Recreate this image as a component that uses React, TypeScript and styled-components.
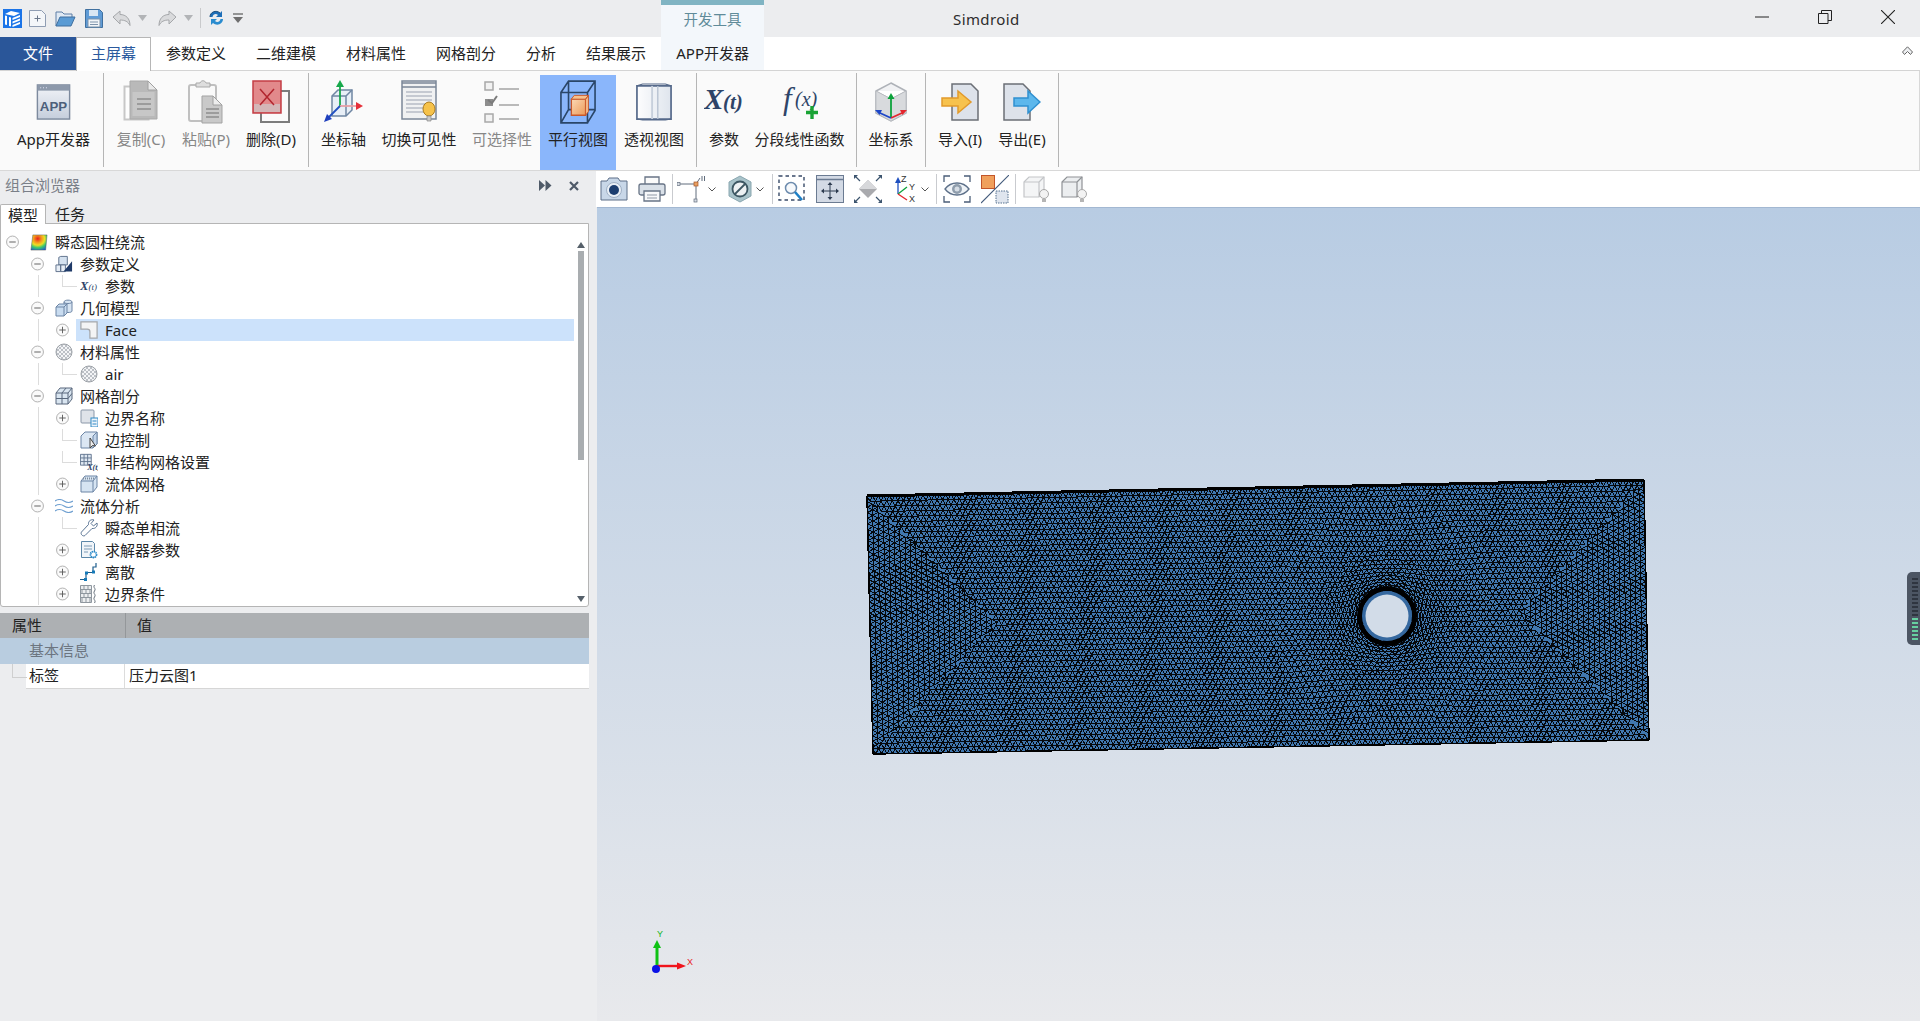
import React, { useMemo } from "react";
import styled, { createGlobalStyle } from "styled-components";

const UI_FONT = `"Noto Sans", "Noto Sans CJK SC", sans-serif`;

const Global = createGlobalStyle`
  html, body { margin: 0; padding: 0; height: 100%; overflow: hidden; background: #ecedef; }
  body { font-family: ${UI_FONT}; font-size: 15px; color: #222; }
  #root { height: 100%; }
  * { box-sizing: border-box; }
`;

const Page = styled.div`
  width: 100%;
  height: 100vh;
  display: flex;
  flex-direction: column;
  overflow: hidden;
  background: #ecedef;
`;

/* ---------- title bar ---------- */
const TitleBar = styled.div`
  height: 37px;
  flex: none;
  display: flex;
  background: #ecedef;
`;
const QuickAccess = styled.div`
  width: 661px;
  flex: none;
  display: flex;
  align-items: center;
  padding: 0 0 1px 3px;
`;
const QuickSlot = styled.span<{ $ml?: number; $w?: number }>`
  display: inline-flex;
  margin-left: ${(p) => p.$ml ?? 0}px;
  width: ${(p) => p.$w ?? 19}px;
  height: 19px;
  align-items: center;
  justify-content: center;
`;
const QuickSep = styled.span`
  width: 1px;
  height: 20px;
  margin-left: 7px;
  background: #c9cacc;
`;
const ContextHead = styled.div`
  width: 103px;
  flex: none;
  background: #f3f7fb;
  border-top: 5px solid #80b4c3;
  color: #5f8b99;
  font-size: 14.5px;
  line-height: 28px;
  text-align: center;
`;
const AppTitle = styled.div`
  margin-left: 189px;
  line-height: 38px;
  font-size: 15px;
  letter-spacing: 0.4px;
  color: #2c2c2c;
`;
const WindowButtons = styled.div`
  margin-left: auto;
  display: flex;
  padding-right: 1px;
`;
const WindowButton = styled.span`
  width: 63px;
  height: 34px;
  display: flex;
  align-items: center;
  justify-content: center;
`;

/* ---------- ribbon tabs ---------- */
const TabStrip = styled.div`
  height: 34px;
  flex: none;
  display: flex;
  background: #fff;
  border-bottom: 1px solid #d4d4d4;
  position: relative;
`;
const FileTab = styled.div`
  width: 76px;
  height: 33px;
  background: #2a5699;
  color: #fff;
  text-align: center;
  line-height: 33px;
`;
const RibbonTab = styled.div<{ $active?: boolean; $context?: boolean }>`
  height: ${(p) => (p.$active ? 34 : 33)}px;
  padding: 0 ${(p) => (p.$active ? 14 : 15)}px;
  line-height: 33px;
  white-space: nowrap;
  color: ${(p) => (p.$active ? "#2a5a9e" : "#222")};
  background: ${(p) => (p.$active ? "#fff" : p.$context ? "#f3f7fb" : "transparent")};
  ${(p) => p.$active && "border: 1px solid #b6b6b6; border-bottom: 0; line-height: 31px; z-index: 1;"}
  ${(p) => p.$context && "width: 103px; padding: 0; text-align: center;"}
`;
const CollapseSlot = styled.span`
  position: absolute;
  right: 7px;
  top: 9px;
  display: flex;
`;

/* ---------- ribbon ---------- */
const Ribbon = styled.div`
  height: 100px;
  flex: none;
  display: flex;
  background: #fafafa;
  border-bottom: 1px solid #d8d8d8;
  border-right: 1px solid #d8d8d8;
`;
const RibbonGroup = styled.div<{ $first?: boolean }>`
  display: flex;
  padding: 4px 4px 0 ${(p) => (p.$first ? 8 : 4)}px;
`;
const RibbonSep = styled.div`
  width: 1px;
  flex: none;
  margin: 2px 0 3px;
  background: #b5b5b5;
`;
const RibbonButton = styled.div<{ $w: number; $active?: boolean; $muted?: boolean }>`
  width: ${(p) => p.$w}px;
  display: flex;
  flex-direction: column;
  align-items: center;
  background: ${(p) => (p.$active ? "#8ab6fb" : "transparent")};
  color: ${(p) => (p.$muted ? "#878787" : "#222")};
`;
const RibbonIcon = styled.div`
  height: 44px;
  margin-top: 5px;
  display: flex;
  align-items: center;
  justify-content: center;
`;
const RibbonLabel = styled.div`
  margin-top: 4px;
  line-height: 22px;
  white-space: nowrap;
`;

/* ---------- workspace ---------- */
const Workspace = styled.div`
  flex: 1;
  min-height: 0;
  display: flex;
`;
const LeftPanel = styled.div`
  width: 597px;
  flex: none;
  display: flex;
  flex-direction: column;
  padding-right: 8px;
`;
const PanelHead = styled.div`
  height: 33px;
  flex: none;
  display: flex;
  align-items: center;
  padding: 0 10px 6px 5px;
  color: #7a7f88;
`;
const PanelTools = styled.div`
  margin-left: auto;
  display: flex;
  gap: 17px;
  align-items: center;
  padding-top: 2px;
`;
const ModelTabs = styled.div`
  height: 19px;
  flex: none;
  display: flex;
`;
const ModelTab = styled.div<{ $active?: boolean }>`
  width: 46px;
  height: 20px;
  text-align: center;
  line-height: 20px;
  ${(p) =>
    p.$active
      ? "background:#fff;border:1px solid #b5b5b5;border-bottom:0;border-radius:2px 2px 0 0;z-index:1;"
      : "margin-left:-1px;width:50px;"}
`;
const TreeBox = styled.div`
  height: 384px;
  flex: none;
  display: flex;
  background: #fff;
  border: 1px solid #b5b5b5;
  border-radius: 0 0 3px 3px;
  overflow: hidden;
`;
const TreeList = styled.div`
  flex: 1;
  min-width: 0;
  padding-top: 7px;
`;
const TreeRow = styled.div<{ $level: number; $trunk?: boolean; $elbow?: boolean }>`
  position: relative;
  height: 22px;
  display: flex;
  align-items: stretch;
  padding-left: ${(p) => 5 + 25 * p.$level}px;
  ${(p) =>
    p.$trunk &&
    `&::before { content: ""; position: absolute; left: 37px; top: 0; bottom: 0; width: 1px; background: #dcdcdc; }`}
  ${(p) =>
    p.$elbow &&
    `&::after { content: ""; position: absolute; left: 61px; top: 0; height: 11px; width: 14px; border-left: 1px solid #dcdcdc; border-bottom: 1px solid #dcdcdc; }`}
`;
const ExpanderSlot = styled.span`
  width: 13px;
  flex: none;
  margin-right: 7px;
  display: flex;
  align-items: center;
  position: relative;
  z-index: 1;
`;
const TreeContent = styled.div<{ $selected?: boolean }>`
  flex: 1;
  display: flex;
  align-items: center;
  gap: 7px;
  padding-left: 4px;
  line-height: 22px;
  background: ${(p) => (p.$selected ? "#cce2fb" : "transparent")};
`;
const TreeIconBox = styled.span`
  width: 18px;
  height: 18px;
  flex: none;
  display: flex;
  align-items: center;
  justify-content: center;
`;
const ScrollTrack = styled.div`
  width: 14px;
  flex: none;
  display: flex;
  flex-direction: column;
  align-items: center;
  padding: 18px 0 4px;
`;
const ScrollArrow = styled.span<{ $down?: boolean }>`
  width: 0;
  height: 0;
  border-left: 4px solid transparent;
  border-right: 4px solid transparent;
  ${(p) => (p.$down ? "border-top: 6px solid #56606a;" : "border-bottom: 6px solid #56606a;")}
  ${(p) => p.$down && "margin-top: auto;"}
`;
const ScrollThumb = styled.div`
  width: 6px;
  height: 209px;
  margin-top: 3px;
  background: #a9adb0;
`;
const PropsTable = styled.div`
  margin-top: 6px;
  display: flex;
  flex-direction: column;
`;
const PropsHead = styled.div`
  height: 25px;
  display: flex;
  background: #adb0b3;
  line-height: 24px;
  padding-left: 1px;
`;
const PropsHeadCell = styled.div<{ $w?: number }>`
  width: ${(p) => (p.$w ? `${p.$w}px` : "auto")};
  padding-left: 11px;
  ${(p) => p.$w && "border-right: 1px solid #94979a;"}
`;
const PropsBand = styled.div`
  height: 26px;
  background: #b9cde0;
  color: #6c7580;
  line-height: 24px;
  padding-left: 29px;
`;
const PropsRow = styled.div`
  height: 25px;
  display: flex;
  margin-left: 26px;
  background: #fff;
  border-bottom: 1px solid #d6d6d6;
  line-height: 22px;
  position: relative;
  &::before {
    content: "";
    position: absolute;
    left: -14px;
    top: 0;
    width: 14px;
    height: 13px;
    border-left: 1px solid #cfcfcf;
    border-bottom: 1px solid #cfcfcf;
  }
`;
const PropsKey = styled.div`
  width: 99px;
  padding-left: 3px;
  border-right: 1px solid #dcdcdc;
`;
const PropsValue = styled.div`
  padding-left: 4px;
`;

/* ---------- 3d view ---------- */
const RightPanel = styled.div`
  flex: 1;
  min-width: 0;
  display: flex;
  flex-direction: column;
`;
const ViewToolbar = styled.div`
  height: 36px;
  flex: none;
  background: #fff;
  display: flex;
  align-items: center;
  padding-left: 4px;
  margin-left: -1px;
`;
const ToolSlot = styled.span<{ $ml?: number; $w?: number }>`
  width: ${(p) => p.$w ?? 28}px;
  height: 28px;
  margin-left: ${(p) => p.$ml ?? 0}px;
  flex: none;
  display: flex;
  align-items: center;
  justify-content: center;
`;
const ToolSep = styled.span<{ $ml: number }>`
  width: 1px;
  height: 30px;
  margin-left: ${(p) => p.$ml}px;
  background: #c9cbcf;
  flex: none;
`;
const Viewport = styled.div`
  flex: 1;
  min-height: 0;
  position: relative;
  overflow: hidden;
  background: linear-gradient(180deg, #b8cce3 0%, #e8e9ec 100%);
  border-top: 1px solid #a3b8d2;
`;
const SceneSvg = styled.svg`
  position: absolute;
  left: 0;
  top: -1px;
  width: 1323px;
  height: 814px;
`;
const SideHandle = styled.div`
  position: absolute;
  right: 0;
  top: 364px;
  width: 13px;
  height: 73px;
  border-radius: 5px 0 0 5px;
  background: #4c5563;
  display: flex;
  flex-direction: column;
  justify-content: center;
  gap: 2px;
  padding-left: 5px;
`;
const HandleTick = styled.span<{ $on?: boolean }>`
  width: 6px;
  height: 2px;
  background: ${(p) => (p.$on ? "#66d0a0" : "#2f3540")};
`;

/* ---------- icons: quick access ---------- */
const LogoIcon = () => (
  <svg width="19" height="19" viewBox="0 0 19 19">
    <rect width="19" height="19" fill="#1b74e8" />
    <path d="M2 5l6-3 9 2-6 3z" fill="#fff" />
    <path d="M2 6.500v9l2 .5v-9zM6 8v9l2 .5V8.500z" fill="#fff" />
    <path d="M9.500 9l7.500-3v2l-7.500 3zM9.500 12.500l7.500-3v2l-7.500 3zM9.500 16l7.500-3v2l-7.500 3z" fill="#fff" />
  </svg>
);
const NewIcon = () => (
  <svg width="19" height="19" viewBox="0 0 19 19">
    <path d="M1.500 1.500h12l4 4v12h-16z" fill="#f4f6f9" stroke="#8f9db3" />
    <path d="M9.500 6.500v6M6.500 9.500h6" stroke="#6a778b" />
  </svg>
);
const OpenIcon = () => (
  <svg width="21" height="19" viewBox="0 0 21 19">
    <path d="M1 17V3h6l2 2h8v3" fill="#dfe9f4" stroke="#5e7fa6" />
    <path d="M1 17l4-9h15l-4 9z" fill="#5a9bd4" stroke="#3f6f9f" />
  </svg>
);
const SaveIcon = () => (
  <svg width="18" height="19" viewBox="0 0 18 19">
    <path d="M.5.5h14l3 3v15H.5z" fill="#5f9bd6" stroke="#40709f" />
    <rect x="4" y="1" width="9" height="6" fill="#d9e6f3" />
    <rect x="3" y="10" width="12" height="8" fill="#f2f5f8" stroke="#7d93ab" />
    <path d="M5 13h8M5 15.500h8" stroke="#7d93ab" />
  </svg>
);
const UndoIcon = ({ flip }: { flip?: boolean }) => (
  <svg width="19" height="17" viewBox="0 0 19 17" style={flip ? { transform: "scaleX(-1)" } : undefined}>
    <path d="M1 7l7-6v3.500c6 0 10 4 10 11-2-4-5-5.500-10-5.500V14z" fill="#d9dadc" stroke="#a5a7aa" strokeLinejoin="round" />
  </svg>
);
const DropIcon = () => (
  <svg width="9" height="6" viewBox="0 0 9 6">
    <path d="M0 0h9L4.500 6z" fill="#b2b4b7" />
  </svg>
);
const RefreshIcon = () => (
  <svg width="17" height="18" viewBox="0 0 17 18">
    <path d="M2 8c0-5 6-7.500 10-4l2-2v6H8l2-2c-2-2-5-1-5.500 2z" fill="#1e6fb8" />
    <path d="M15 10c0 5-6 7.500-10 4l-2 2v-6h6l-2 2c2 2 5 1 5.500-2z" fill="#2a8ccf" />
    <path d="M2 8c0-5 6-7.500 10-4" fill="none" stroke="#1f4f7c" strokeWidth="1" />
  </svg>
);
const CustomizeIcon = () => (
  <svg width="10" height="11" viewBox="0 0 10 11">
    <path d="M0 1h10" stroke="#777" strokeWidth="1.500" />
    <path d="M0 4h10L5 10z" fill="#6f6f6f" />
  </svg>
);

/* ---------- icons: window ---------- */
const MinIcon = () => (
  <svg width="14" height="14" viewBox="0 0 14 14"><path d="M0 7h14" stroke="#222" strokeWidth="1" /></svg>
);
const RestoreIcon = () => (
  <svg width="14" height="14" viewBox="0 0 14 14">
    <path d="M.5 3.500h9.500v10H.5zM3.500 3.500V.5h10v10H10" fill="none" stroke="#222" />
  </svg>
);
const CloseIcon = () => (
  <svg width="14" height="14" viewBox="0 0 14 14"><path d="M0 0l14 14M14 0L0 14" stroke="#222" strokeWidth="1.100" /></svg>
);
const CollapseIcon = () => (
  <svg width="11" height="10" viewBox="0 0 11 10">
    <path d="M5.500.8L10.500 6 8.500 8.500 5.500 5.500 2.500 8.500 .5 6z" fill="#eef0f2" stroke="#666" />
  </svg>
);

/* ---------- icons: ribbon ---------- */
const AppIcon = () => (
  <svg width="35" height="36" viewBox="0 0 36 38">
    <defs>
      <linearGradient id="appBg" x1="0" y1="0" x2="0" y2="1">
        <stop offset="0" stopColor="#f2f4f8" />
        <stop offset="1" stopColor="#c5cedc" />
      </linearGradient>
    </defs>
    <rect x="1" y="1" width="34" height="36" fill="url(#appBg)" stroke="#7d8a9e" strokeWidth="1.500" />
    <rect x="1" y="1" width="34" height="6" fill="#8d99ab" />
    <path d="M4 4h1M7 4h1M10 4h1" stroke="#eef" />
    <text x="18" y="28" textAnchor="middle" fontFamily="Liberation Sans, sans-serif" fontWeight="700" fontSize="14" fill="#4d5f7a">APP</text>
  </svg>
);
const CopyIcon = () => (
  <svg width="36" height="44" viewBox="0 0 36 44">
    <path d="M1.500 6.500h24v33h-24z" fill="#fdfdfd" stroke="#c7c7c7" strokeWidth="2" />
    <path d="M7 1h18l9 9v29H7z" fill="#b9b9b9" stroke="#a9a9a9" />
    <path d="M25 1v9h9z" fill="#e9e9e9" stroke="#a0a0a0" />
    <rect x="9.500" y="12" width="22" height="24" fill="#c7c7c7" />
    <path d="M14 19h14M14 24h14M14 29h14" stroke="#8e8e8e" strokeWidth="1.500" />
  </svg>
);
const PasteIcon = () => (
  <svg width="36" height="44" viewBox="0 0 36 44">
    <rect x="1" y="5" width="27" height="36" rx="2" fill="#fafafa" stroke="#c0c0c0" strokeWidth="2" />
    <path d="M8 7V3h4c1-3 5-3 6 0h4v4z" fill="#dedede" stroke="#a9a9a9" />
    <path d="M14 16h11l9 9v18H14z" fill="#c9c9c9" stroke="#a3a3a3" />
    <path d="M25 16v9h9z" fill="#ededed" stroke="#a0a0a0" />
    <path d="M18 29h13M18 33h13M18 37h13" stroke="#8d8d8d" strokeWidth="1.500" />
  </svg>
);
const DeleteIcon = () => (
  <svg width="38" height="44" viewBox="0 0 38 44">
    <rect x="9" y="11" width="28" height="31" fill="#fafafa" stroke="#7c7c7c" strokeWidth="2" />
    <rect x="1" y="1" width="28" height="32" fill="#e2898b" stroke="#c33e45" strokeWidth="1.500" />
    <rect x="2" y="24" width="26" height="8" fill="#d4b6b7" />
    <path d="M8 9l14 16M22 9L8 25" stroke="#b2262f" strokeWidth="1.500" />
  </svg>
);
const AxisIcon = () => (
  <svg width="40" height="44" viewBox="0 0 40 44">
    <path d="M8 16l6-6h14v20l-6 6H8z" fill="#dfeaf5" fillOpacity=".7" stroke="#6f86a3" strokeWidth="1.500" />
    <path d="M8 16h14v20M22 16l6-6" fill="none" stroke="#6f86a3" strokeWidth="1.500" />
    <path d="M16 26V6" stroke="#17a84b" strokeWidth="1.800" />
    <path d="M16 0l-4 7h8z" fill="#17a84b" />
    <path d="M16 26h16" stroke="#e8a0a5" strokeWidth="1.800" />
    <path d="M39 26l-7-4v8z" fill="#e5303a" />
    <path d="M16 26L4 38" stroke="#2250c0" strokeWidth="1.800" />
    <path d="M0 42l3-8 5 5z" fill="#1f3fbd" />
  </svg>
);
const VisibilityIcon = () => (
  <svg width="36" height="44" viewBox="0 0 36 44">
    <rect x="1" y="1" width="34" height="38" fill="#f0f1f2" stroke="#7b8798" strokeWidth="1.500" />
    <path d="M1 3h34M1 7h34" stroke="#7b8798" strokeWidth="1.500" />
    <path d="M5 12h26M5 16h26M5 20h26M5 24h26M5 28h20M5 32h20" stroke="#b6bcc6" strokeWidth="1.500" />
    <ellipse cx="28" cy="29" rx="6" ry="7" fill="#f6c24a" stroke="#a87a20" />
    <path d="M26 36h4v5h-4z" fill="#c9c9c9" stroke="#888" strokeWidth=".7" />
  </svg>
);
const SelectableIcon = () => (
  <svg width="36" height="42" viewBox="0 0 36 42">
    <g fill="#f2f2f2" stroke="#a8a8a8" strokeWidth="1.500">
      <rect x="1" y="1" width="8" height="8" />
      <rect x="1" y="33" width="8" height="8" />
    </g>
    <rect x="1" y="18" width="8" height="7" fill="#8d8d8d" />
    <path d="M4 19l4 3 5-7" fill="none" stroke="#7b7b7b" strokeWidth="2" />
    <path d="M15 8h20M15 24h20M15 38h20" stroke="#b9b9b9" strokeWidth="2" />
  </svg>
);
const ParallelIcon = () => (
  <svg width="36" height="44" viewBox="0 0 38 46">
    <defs>
      <linearGradient id="orangeBox" x1="0" y1="0" x2="1" y2="1">
        <stop offset="0" stopColor="#fbd9b6" />
        <stop offset="1" stopColor="#ec9a57" />
      </linearGradient>
    </defs>
    <path d="M1 13h28v32H1zM1 13l8-12h28v31l-8 13M29 13l8-12M9 1v30M1 45l8-14h28" fill="none" stroke="#2a4668" strokeWidth="1.700" />
    <path d="M12 20h15v17H12z" fill="url(#orangeBox)" stroke="#c9582a" strokeWidth="1.400" />
    <path d="M12 20l3-4h15l-3 4zM27 20l3-4v17l-3 4z" fill="#f6c18e" stroke="#c9582a" strokeWidth="1" />
  </svg>
);
const PerspectiveIcon = () => (
  <svg width="36" height="38" viewBox="0 0 38 40">
    <defs>
      <linearGradient id="perspFace" x1="0" y1="0" x2="1" y2="0">
        <stop offset="0" stopColor="#fdfdfe" />
        <stop offset="1" stopColor="#dfe5ed" />
      </linearGradient>
    </defs>
    <path d="M1 3h36v35H1z" fill="url(#perspFace)" stroke="#55698a" strokeWidth="1.800" />
    <path d="M17 3v35" stroke="#c7d0dc" strokeWidth="2" />
    <path d="M23 3v35" stroke="#b8c3d2" strokeWidth="1.500" />
    <path d="M1 3l6-2h24l6 2M1 38l6 1h24l6-1" fill="none" stroke="#55698a" strokeWidth="1.200" />
  </svg>
);
const XtLargeIcon = () => (
  <svg width="40" height="32" viewBox="0 0 40 32">
    <text x="0" y="23" fontFamily="Liberation Serif, serif" fontStyle="italic" fontWeight="700" fontSize="29" fill="#2e4468">X</text>
    <text x="19" y="23" fontFamily="Liberation Serif, serif" fontStyle="italic" fontWeight="700" fontSize="21" fill="#2e4468">(t)</text>
  </svg>
);
const FxIcon = () => (
  <svg width="40" height="38" viewBox="0 0 40 38">
    <text x="3" y="26" fontFamily="Liberation Serif, serif" fontStyle="italic" fontSize="31" fill="#2e4468">f</text>
    <text x="15" y="23" fontFamily="Liberation Serif, serif" fontStyle="italic" fontSize="20" fill="#2e4468">(x)</text>
    <path d="M32 23v13M26 29.500h12" stroke="#19a334" strokeWidth="3.400" />
  </svg>
);
const CoordIcon = () => (
  <svg width="34" height="40" viewBox="0 0 34 40">
    <path d="M17 1l15 8v22l-15 8L2 31V9z" fill="#f1f2f4" stroke="#aeb2b8" strokeWidth="1.500" />
    <path d="M2 9l15 8 15-8" fill="#ffffff" stroke="#b9bcc2" strokeWidth="1" />
    <path d="M2 31l15 8 15-8V9l-15 8-15-8z" fill="#d8dadd" stroke="#b2b5ba" strokeWidth=".7" />
    <path d="M17 36V15" stroke="#0da23b" strokeWidth="1.800" />
    <path d="M17 11l-3.500 6h7z" fill="#0da23b" />
    <path d="M17 36l11-5" stroke="#e3262e" strokeWidth="1.800" />
    <path d="M33 28l-7 0 2.500 5z" fill="#e3262e" />
    <path d="M17 36L6 31" stroke="#1c46c8" strokeWidth="1.800" />
    <path d="M1 28l7 0-2.500 5z" fill="#1c46c8" />
  </svg>
);
const ImportIcon = () => (
  <svg width="38" height="38" viewBox="0 0 38 38">
    <path d="M11 1h19l7 7v29H11z" fill="#dde2ea" stroke="#6b6f76" strokeWidth="1.500" />
    <path d="M1 15h16V8l13 11-13 11v-7H1z" fill="#f7c24d" stroke="#e29a2b" strokeWidth="1.500" />
  </svg>
);
const ExportIcon = () => (
  <svg width="38" height="38" viewBox="0 0 38 38">
    <path d="M1 1h19l7 7v29H1z" fill="#dde2ea" stroke="#6b6f76" strokeWidth="1.500" />
    <path d="M11 15h14V8l12 11-12 11v-7H11z" fill="#5cb7ec" stroke="#2f90d0" strokeWidth="1.500" />
  </svg>
);

/* ---------- icons: panel ---------- */
const PinIcon = () => (
  <svg width="13" height="11" viewBox="0 0 13 11">
    <path d="M0 0l6 5.500L0 11zM6.500 0l6 5.500-6 5.500z" fill="#4f5a68" />
  </svg>
);
const PanelCloseIcon = () => (
  <svg width="10" height="10" viewBox="0 0 10 10"><path d="M1 1l8 8M9 1l-8 8" stroke="#4f5a68" strokeWidth="2.200" /></svg>
);
const Expander = ({ open }: { open: boolean }) => (
  <svg width="14" height="14" viewBox="0 0 14 14">
    <circle cx="7" cy="7" r="6.400" fill="#fafafa" stroke="#acacac" />
    <path d={open ? "M3.500 7h7" : "M3.500 7h7M7 3.500v7"} stroke="#5a5a5a" />
  </svg>
);

/* ---------- icons: tree ---------- */
const ContourIcon = () => (
  <svg width="19" height="19" viewBox="0 0 19 18">
    <defs>
      <radialGradient id="contour" cx=".42" cy=".25" r=".85">
        <stop offset="0" stopColor="#e8201c" />
        <stop offset=".3" stopColor="#f59a1e" />
        <stop offset=".5" stopColor="#eede23" />
        <stop offset=".7" stopColor="#3cc96c" />
        <stop offset="1" stopColor="#1a58d8" />
      </radialGradient>
    </defs>
    <path d="M3 1h15l-1.500 16H1z" fill="url(#contour)" stroke="#555" strokeWidth=".5" />
  </svg>
);
const ParamDefIcon = () => (
  <svg width="19" height="18" viewBox="0 0 19 18">
    <path d="M4 2l2-1h7v9H4z" fill="#d4e1ef" stroke="#5d708b" />
    <path d="M1 10h5v7H1zM6 10h5v7H6z" fill="#e6edf5" stroke="#5d708b" />
    <path d="M18 6v11H9z" fill="#1f3a68" />
  </svg>
);
const GeoIcon = () => (
  <svg width="18" height="18" viewBox="0 0 18 18">
    <path d="M9 3c0-2.500 8-2.500 8 0v9c0 2-8 2-8 0z" fill="#d7e4f2" stroke="#6d85a5" />
    <path d="M9 3c0 2 8 2 8 0" fill="none" stroke="#6d85a5" />
    <path d="M1 8l3-3h8v9l-3 3H1z" fill="#c9dcf0" stroke="#6d85a5" />
    <path d="M1 8h8v9M9 8l3-3" fill="none" stroke="#6d85a5" />
  </svg>
);
const FaceIcon = () => (
  <svg width="20" height="20" viewBox="0 0 20 20">
    <path d="M1 1h18v18h-8v-7c0-2-1-3-3-3H1z" fill="#f3f4f5" stroke="#a5a8ac" strokeWidth="1.400" />
  </svg>
);
const MaterialIcon = () => (
  <svg width="18" height="18" viewBox="0 0 18 18">
    <defs>
      <pattern id="matDots" width="4" height="4" patternUnits="userSpaceOnUse">
        <rect width="4" height="4" fill="#f4f5f7" />
        <rect width="2" height="2" fill="#bcc0c6" />
        <rect x="2" y="2" width="2" height="2" fill="#bcc0c6" />
      </pattern>
    </defs>
    <circle cx="9" cy="9" r="8" fill="url(#matDots)" stroke="#9ba0a6" />
  </svg>
);
const MeshCubeIcon = () => (
  <svg width="18" height="18" viewBox="0 0 18 18">
    <path d="M1 6l4-5h12v11l-4 5H1z" fill="#d9e5f0" stroke="#58677c" />
    <path d="M1 6h12v11M13 6l4-5M7 6v11M1 11.500h12M7 6l4-5M13 11.500l4-5" fill="none" stroke="#58677c" />
  </svg>
);
const BoundaryNameIcon = () => (
  <svg width="18" height="18" viewBox="0 0 18 18">
    <rect x="1" y="1" width="13" height="13" rx="1" fill="#dfe3e9" stroke="#8a97a8" />
    <rect x="11" y="9" width="7" height="9" fill="#eef4fb" stroke="#2f8ac6" />
    <path d="M12.500 12h4M12.500 15h4" stroke="#2f8ac6" />
  </svg>
);
const EdgeControlIcon = () => (
  <svg width="18" height="18" viewBox="0 0 18 18">
    <path d="M1 5l4-4h12v12l-4 4H1z" fill="#dce7f3" stroke="#6d85a5" />
    <path d="M13 5l4-4v12l-4 4z" fill="#c3d5ea" stroke="#6d85a5" />
    <path d="M10 7v10l2.500-2.500 3 .5z" fill="#eee" stroke="#444" />
  </svg>
);
const UnstructuredIcon = () => (
  <svg width="20" height="18" viewBox="0 0 20 18">
    <path d="M.5.5h12v12H.5zM.5 4.500h12M.5 8.500h12M4.500.5v12M8.500.5v12" fill="#dfe8f2" stroke="#5e728c" />
    <text x="8" y="17.500" fontFamily="Liberation Serif, serif" fontStyle="italic" fontWeight="700" fontSize="9" fill="#2e4468">X(t)</text>
  </svg>
);
const FluidMeshIcon = () => (
  <svg width="18" height="18" viewBox="0 0 18 18">
    <path d="M1 6l4-5h12v11l-4 5H1z" fill="#d6e4f2" stroke="#6d85a5" />
    <path d="M1 6h12v11M13 6l4-5" fill="none" stroke="#6d85a5" />
    <path d="M3 3.500h11" stroke="#7f8c9c" strokeDasharray="1 1" strokeWidth="2" />
  </svg>
);
const WavesIcon = () => (
  <svg width="18" height="14" viewBox="0 0 18 14">
    <path d="M0 2c3-2 6-2 9 0s6 2 9 0M0 7c3-2 6-2 9 0s6 2 9 0M0 12c3-2 6-2 9 0s6 2 9 0" fill="none" stroke="#6e9fd0" strokeWidth="1.100" />
  </svg>
);
const WrenchIcon = () => (
  <svg width="18" height="18" viewBox="0 0 18 18">
    <path d="M17 4l-3.500 3-2.500-2.500 3-3.500c-3-1-6 1-5.500 4.500L1.500 13c-1.500 2 1.500 5 3.500 3.500l7-7c3.500.5 6-2.500 5-5.500z" fill="#fff" stroke="#5b7594" />
  </svg>
);
const SolverIcon = () => (
  <svg width="18" height="18" viewBox="0 0 18 18">
    <path d="M1.500.5h11l2 2v14h-13z" fill="#f1f5f9" stroke="#5c87a8" />
    <path d="M4 5h8M4 8h8M4 11h4" stroke="#7a9ab5" />
    <circle cx="13.500" cy="13.500" r="3" fill="#fff" stroke="#2688c9" strokeWidth="1.800" strokeDasharray="1.400 .6" />
  </svg>
);
const DiscreteIcon = () => (
  <svg width="18" height="18" viewBox="0 0 18 18">
    <path d="M0 16.500h6v-7h7V4h3V0" fill="none" stroke="#1d5d8c" strokeWidth="1.200" />
    <rect x="5" y="8.500" width="3" height="3" fill="#1479b8" />
    <rect x="12" y="7.500" width="3" height="3" fill="#1479b8" />
    <rect x="4" y="15" width="3" height="3" fill="#1479b8" />
  </svg>
);
const BoundaryWallIcon = () => (
  <svg width="18" height="18" viewBox="0 0 18 18">
    <path d="M.5.5h11v17H.5zM.5 4.500h11M.5 8.500h11M.5 12.500h11M4 .5v4M8 .5v4M2 4.500v4M6 4.500v4M10 4.500v4M4 8.500v4M8 8.500v4M2 12.500v5M6 12.500v5M10 12.500v5" fill="#eceef0" stroke="#8f979f" />
    <path d="M14.500 0c-2 3 2 3 0 6s2 3 0 6 2 3 0 6" fill="none" stroke="#67717c" />
  </svg>
);
const XtSmallIcon = () => (
  <svg width="20" height="14" viewBox="0 0 20 14">
    <text x="0" y="11" fontFamily="Liberation Serif, serif" fontStyle="italic" fontWeight="700" fontSize="14" fill="#2e4468">X</text>
    <text x="9.500" y="11" fontFamily="Liberation Serif, serif" fontStyle="italic" fontSize="10" fill="#2e4468">(t)</text>
  </svg>
);

/* ---------- icons: view toolbar ---------- */
const CameraIcon = () => (
  <svg width="28" height="24" viewBox="0 0 28 24">
    <path d="M1 4h6l2-3h9l2 3h7v19H1z" fill="#c8d7e8" stroke="#5d6f88" />
    <circle cx="14" cy="13" r="7.500" fill="#e9eff6" stroke="#9fb0c5" />
    <circle cx="14" cy="13" r="5" fill="#1c3e70" />
  </svg>
);
const PrinterIcon = () => (
  <svg width="28" height="26" viewBox="0 0 28 26">
    <path d="M7 8V1h14v7" fill="#fbfbfb" stroke="#687486" strokeWidth="1.300" />
    <rect x="1" y="8" width="26" height="11" rx="2" fill="#d9e0e8" stroke="#687486" strokeWidth="1.300" />
    <path d="M6 15h16v10H6z" fill="#f7f8fa" stroke="#687486" strokeWidth="1.300" />
    <path d="M9 19h10M9 22h10" stroke="#8f98a5" />
  </svg>
);
const ChevronSmall = () => (
  <svg width="8" height="5" viewBox="0 0 8 5"><path d="M.5.5L4 4 7.500.5" fill="none" stroke="#555" /></svg>
);
const MeasureIcon = () => (
  <svg width="28" height="28" viewBox="0 0 28 28">
    <path d="M1 9h18v17" fill="none" stroke="#606c7c" />
    <path d="M19 9l4-6" stroke="#606c7c" />
    <rect x="0" y="7.500" width="3" height="3" fill="#d9dee5" stroke="#606c7c" strokeWidth=".7" />
    <rect x="17" y="24" width="3" height="3" fill="#d9dee5" stroke="#606c7c" strokeWidth=".7" />
    <rect x="17" y="7" width="4" height="4" fill="#e8a061" stroke="#a8582a" strokeWidth=".7" />
    <path d="M25 1v5M27.500 1v5" stroke="#606c7c" />
  </svg>
);
const ProhibitIcon = () => (
  <svg width="26" height="28" viewBox="0 0 26 28">
    <path d="M13 1l11 6v14l-11 6-11-6V7z" fill="#a9c3ca" stroke="#8aa7b0" />
    <circle cx="13" cy="14" r="7.500" fill="#edf1f3" stroke="#3d5763" strokeWidth="1.800" />
    <path d="M8 19l10-10" stroke="#3d5763" strokeWidth="1.800" />
  </svg>
);
const ZoomBoxIcon = () => (
  <svg width="28" height="28" viewBox="0 0 28 28">
    <rect x="1" y="1" width="25" height="24" fill="none" stroke="#384a68" strokeWidth="1.400" strokeDasharray="3.500 3" />
    <circle cx="13" cy="13" r="5.500" fill="#f6f9fc" stroke="#6d8cae" strokeWidth="1.500" />
    <path d="M17 17l7 8" stroke="#1d7fc6" strokeWidth="2.600" />
  </svg>
);
const FitIcon = () => (
  <svg width="28" height="28" viewBox="0 0 28 28">
    <rect x=".5" y=".5" width="27" height="27" fill="#d3dae5" stroke="#6b7b92" />
    <path d="M.5 4.500h27" stroke="#6b7b92" strokeWidth="1.500" />
    <path d="M14 7l-2.500 3h5zM14 25l-2.500-3h5zM5 16l3-2.500v5zM23 16l-3-2.500v5z" fill="#2e3c50" />
    <path d="M14 10v12M8 16h12" stroke="#2e3c50" />
  </svg>
);
const DiamondIcon = () => (
  <svg width="28" height="28" viewBox="0 0 28 28">
    <path d="M14 5l9 9-9 9-9-9z" fill="#a9aaae" />
    <path d="M14 5l9 9H5z" fill="#d7d8db" />
    <path d="M1 1l5 5M27 1l-5 5M1 27l5-5M27 27l-5-5" stroke="#3c546e" strokeWidth="1.200" />
    <path d="M0 0h4L0 4zM28 0h-4l4 4zM0 28h4l-4-4zM28 28h-4l4-4z" fill="#3c546e" />
  </svg>
);
const XyzIcon = () => (
  <svg width="28" height="28" viewBox="0 0 28 28">
    <path d="M6 19V6" stroke="#1f50c0" strokeWidth="1.300" />
    <path d="M6 2L3 8h6z" fill="#1f50c0" />
    <path d="M6 19l9-7" stroke="#0da23b" strokeWidth="1.300" />
    <path d="M6 19l9 6" stroke="#e3262e" strokeWidth="1.300" />
    <g fontFamily="Liberation Sans, sans-serif" fontSize="9" fill="#333">
      <text x="9" y="7">Z</text>
      <text x="17" y="15">Y</text>
      <text x="17" y="27">X</text>
    </g>
  </svg>
);
const EyeIcon = () => (
  <svg width="28" height="28" viewBox="0 0 28 28">
    <path d="M1 7V1h6M21 1h6v6M27 21v6h-6M7 27H1v-6" fill="none" stroke="#4b5e78" strokeWidth="1.300" />
    <path d="M2 14c6-8 18-8 24 0-6 8-18 8-24 0z" fill="#eff3f7" stroke="#5d7089" strokeWidth="1.300" />
    <circle cx="14" cy="14" r="5" fill="#8f9dac" />
    <circle cx="14" cy="14" r="2.500" fill="#d6dde5" />
  </svg>
);
const HalfIcon = () => (
  <svg width="28" height="29" viewBox="0 0 28 29">
    <rect x=".5" y=".5" width="13" height="13" fill="#f0a05c" stroke="#c2552a" />
    <rect x="15" y="16" width="12" height="12" fill="#dfe5ee" stroke="#55708f" strokeDasharray="1.500 1" />
    <path d="M0 28L28 0" stroke="#41597a" strokeWidth="1.100" />
  </svg>
);
const GhostIcon = ({ dark }: { dark?: boolean }) => (
  <svg width="27" height="27" viewBox="0 0 27 27">
    <path d="M1 6l5-5h15v15l-5 5H1z" fill={dark ? "#eceef0" : "#f4f5f6"} stroke={dark ? "#8f9296" : "#c3c5c8"} strokeWidth="1.200" />
    <path d="M1 6h15v15M16 6l5-5" fill="none" stroke={dark ? "#8f9296" : "#c3c5c8"} strokeWidth="1.200" />
    <circle cx="21" cy="18" r="4.500" fill="#f3f3f3" stroke="#a8a8a8" />
    <path d="M19 23h4v3h-4z" fill="#b5b5b5" />
  </svg>
);

/* ---------- mesh ---------- */
type P = [number, number];
const QUAD = { tl: [867, 496] as P, tr: [1644, 480] as P, br: [1649, 740] as P, bl: [873, 754] as P };
const HOLE: P = [1387, 616];
const W = 777;
const H = 259;
const D = H / 49;
const ALONG = 5.6;

function place([u, v]: P): P {
  const a = u / W, b = v / H;
  const x = (1 - b) * ((1 - a) * QUAD.tl[0] + a * QUAD.tr[0]) + b * ((1 - a) * QUAD.bl[0] + a * QUAD.br[0]);
  const y = (1 - b) * ((1 - a) * QUAD.tl[1] + a * QUAD.tr[1]) + b * ((1 - a) * QUAD.bl[1] + a * QUAD.br[1]);
  const dx = x - HOLE[0], dy = y - HOLE[1];
  const r = Math.hypot(dx, dy);
  const R0 = 115, Rh = 25;
  if (r >= R0) return [x, y];
  const safe = r < 0.01 ? 0.01 : r;
  const nr = Rh + (R0 - Rh) * Math.pow(r / R0, 1.5);
  return [HOLE[0] + (dx / safe) * nr, HOLE[1] + (dy / safe) * nr];
}

/* Rows of triangles fill the long bands, columns fill the wedges at the two short ends. */
const inEndWedge = ([u, v]: P) => {
  const side = Math.min(u, W - u);
  return side < v && side < H - v;
};

function buildMeshPath(): string {
  const parts: string[] = [];
  const clamp = ([u, v]: P): P => [Math.max(0, Math.min(W, u)), Math.max(0, Math.min(H, v))];
  const edge = (p: P, q: P) => {
    const a = place(clamp(p)), b = place(clamp(q));
    parts.push(`M${a[0].toFixed(1)} ${a[1].toFixed(1)}L${b[0].toFixed(1)} ${b[1].toFixed(1)}`);
  };
  /* rows lattice */
  for (let j = 0; j <= 49; j++) {
    const off = j % 2 ? ALONG / 2 : 0;
    for (let u = off - ALONG; u < W + ALONG; u += ALONG) {
      const n: P = [u, j * D];
      const nbs: P[] = [[u + ALONG, j * D], [u + ALONG / 2, (j + 1) * D], [u - ALONG / 2, (j + 1) * D]];
      nbs.forEach((m) => {
        if (m[1] > H + 0.01) return;
        if (!inEndWedge(n) || !inEndWedge(m)) edge(n, m);
      });
    }
  }
  /* columns lattice in the end wedges */
  const colStep = D;
  for (const side of [0, 1]) {
    for (let i = 0; i <= 25; i++) {
      const u = side === 0 ? i * colStep : W - i * colStep;
      const off = i % 2 ? ALONG / 2 : 0;
      for (let v = off - ALONG; v < H + ALONG; v += ALONG) {
        const n: P = [u, v];
        const nu = side === 0 ? u + colStep : u - colStep;
        const nbs: P[] = [[u, v + ALONG], [nu, v + ALONG / 2], [nu, v - ALONG / 2]];
        nbs.forEach((m) => {
          if (inEndWedge(n) && inEndWedge(m)) edge(n, m);
        });
      }
    }
  }
  return parts.join("");
}

const Scene = () => {
  const mesh = useMemo(buildMeshPath, []);
  const { tl, tr, br, bl } = QUAD;
  return (
    <SceneSvg viewBox="597 207 1323 814">
      <polygon points={`${tl} ${tr} ${br} ${bl}`} fill="#4178b0" />
      <path d={mesh} stroke="#05080c" strokeWidth="1" fill="none" shapeRendering="crispEdges" />
      <path d={`M${tl}L${tr}`} stroke="#000" strokeWidth="3" shapeRendering="crispEdges" />
      <path d={`M${bl}L${br}M${tl}L${bl}M${tr}L${br}`} stroke="#000" strokeWidth="1.500" shapeRendering="crispEdges" />
      <circle cx={HOLE[0]} cy={HOLE[1]} r="27.500" fill="none" stroke="#000" strokeWidth="5" />
      <circle cx={HOLE[0]} cy={HOLE[1]} r="25" fill="#35689f" />
      <circle cx={HOLE[0]} cy={HOLE[1]} r="21.500" fill="#d2dce8" />
      <path d="M657 968V947" stroke="#0fc214" strokeWidth="3" />
      <path d="M657 940l-4 8h8z" fill="#0fc214" />
      <path d="M657 966h22" stroke="#f0141c" strokeWidth="2.400" />
      <path d="M686 966l-9-3.500v7z" fill="#f0141c" />
      <circle cx="656" cy="969" r="4" fill="#0b12e6" />
      <text x="657" y="937" fontFamily="Liberation Sans, sans-serif" fontSize="9" fill="#12b51a">Y</text>
      <text x="687" y="965" fontFamily="Liberation Sans, sans-serif" fontSize="9" fill="#e81820">X</text>
    </SceneSvg>
  );
};

/* ---------- data ---------- */
const TABS = ["参数定义", "二维建模", "材料属性", "网格剖分", "分析", "结果展示"];

type RibbonItem = { label: string; w: number; icon: React.ReactNode; muted?: boolean; active?: boolean };
const GROUPS: RibbonItem[][] = [
  [{ label: "App开发器", w: 91, icon: <AppIcon /> }],
  [
    { label: "复制(C)", w: 66, icon: <CopyIcon />, muted: true },
    { label: "粘贴(P)", w: 64, icon: <PasteIcon />, muted: true },
    { label: "删除(D)", w: 66, icon: <DeleteIcon /> },
  ],
  [
    { label: "坐标轴", w: 61, icon: <AxisIcon /> },
    { label: "切换可见性", w: 90, icon: <VisibilityIcon /> },
    { label: "可选择性", w: 76, icon: <SelectableIcon />, muted: true },
    { label: "平行视图", w: 76, icon: <ParallelIcon />, active: true },
    { label: "透视视图", w: 76, icon: <PerspectiveIcon /> },
  ],
  [
    { label: "参数", w: 46, icon: <XtLargeIcon /> },
    { label: "分段线性函数", w: 105, icon: <FxIcon /> },
  ],
  [{ label: "坐标系", w: 60, icon: <CoordIcon /> }],
  [
    { label: "导入(I)", w: 60, icon: <ImportIcon /> },
    { label: "导出(E)", w: 64, icon: <ExportIcon /> },
  ],
];

type TreeItem = {
  label: string;
  level: number;
  icon: React.ReactNode;
  exp?: "open" | "closed";
  trunk?: boolean;
  elbow?: boolean;
  selected?: boolean;
};
const TREE: TreeItem[] = [
  { label: "瞬态圆柱绕流", level: 0, exp: "open", icon: <ContourIcon /> },
  { label: "参数定义", level: 1, exp: "open", icon: <ParamDefIcon /> },
  { label: "参数", level: 2, trunk: true, elbow: true, icon: <XtSmallIcon /> },
  { label: "几何模型", level: 1, exp: "open", icon: <GeoIcon /> },
  { label: "Face", level: 2, trunk: true, exp: "closed", selected: true, icon: <FaceIcon /> },
  { label: "材料属性", level: 1, exp: "open", icon: <MaterialIcon /> },
  { label: "air", level: 2, trunk: true, elbow: true, icon: <MaterialIcon /> },
  { label: "网格剖分", level: 1, exp: "open", icon: <MeshCubeIcon /> },
  { label: "边界名称", level: 2, trunk: true, exp: "closed", icon: <BoundaryNameIcon /> },
  { label: "边控制", level: 2, trunk: true, elbow: true, icon: <EdgeControlIcon /> },
  { label: "非结构网格设置", level: 2, trunk: true, elbow: true, icon: <UnstructuredIcon /> },
  { label: "流体网格", level: 2, trunk: true, exp: "closed", icon: <FluidMeshIcon /> },
  { label: "流体分析", level: 1, exp: "open", icon: <WavesIcon /> },
  { label: "瞬态单相流", level: 2, trunk: true, elbow: true, icon: <WrenchIcon /> },
  { label: "求解器参数", level: 2, trunk: true, exp: "closed", icon: <SolverIcon /> },
  { label: "离散", level: 2, trunk: true, exp: "closed", icon: <DiscreteIcon /> },
  { label: "边界条件", level: 2, trunk: true, exp: "closed", icon: <BoundaryWallIcon /> },
];

const HANDLE_TICKS = Array.from({ length: 16 }, (_, i) => i >= 10);

export default function App() {
  return (
    <Page>
      <Global />
      <TitleBar>
        <QuickAccess>
          <QuickSlot><LogoIcon /></QuickSlot>
          <QuickSlot $ml={6}><NewIcon /></QuickSlot>
          <QuickSlot $ml={8} $w={21}><OpenIcon /></QuickSlot>
          <QuickSlot $ml={9} $w={18}><SaveIcon /></QuickSlot>
          <QuickSlot $ml={9}><UndoIcon /></QuickSlot>
          <QuickSlot $ml={7} $w={9}><DropIcon /></QuickSlot>
          <QuickSlot $ml={11}><UndoIcon flip /></QuickSlot>
          <QuickSlot $ml={7} $w={9}><DropIcon /></QuickSlot>
          <QuickSep />
          <QuickSlot $ml={7} $w={17}><RefreshIcon /></QuickSlot>
          <QuickSlot $ml={8} $w={10}><CustomizeIcon /></QuickSlot>
        </QuickAccess>
        <ContextHead>开发工具</ContextHead>
        <AppTitle>Simdroid</AppTitle>
        <WindowButtons>
          <WindowButton><MinIcon /></WindowButton>
          <WindowButton><RestoreIcon /></WindowButton>
          <WindowButton><CloseIcon /></WindowButton>
        </WindowButtons>
      </TitleBar>

      <TabStrip>
        <FileTab>文件</FileTab>
        <RibbonTab $active>主屏幕</RibbonTab>
        {TABS.map((t) => (
          <RibbonTab key={t}>{t}</RibbonTab>
        ))}
        <RibbonTab $context>APP开发器</RibbonTab>
        <CollapseSlot><CollapseIcon /></CollapseSlot>
      </TabStrip>

      <Ribbon>
        {GROUPS.map((g, i) => (
          <React.Fragment key={i}>
            <RibbonGroup $first={i === 0}>
              {g.map((b) => (
                <RibbonButton key={b.label} $w={b.w} $muted={b.muted} $active={b.active}>
                  <RibbonIcon>{b.icon}</RibbonIcon>
                  <RibbonLabel>{b.label}</RibbonLabel>
                </RibbonButton>
              ))}
            </RibbonGroup>
            <RibbonSep />
          </React.Fragment>
        ))}
      </Ribbon>

      <Workspace>
        <LeftPanel>
          <PanelHead>
            组合浏览器
            <PanelTools>
              <PinIcon />
              <PanelCloseIcon />
            </PanelTools>
          </PanelHead>
          <ModelTabs>
            <ModelTab $active>模型</ModelTab>
            <ModelTab>任务</ModelTab>
          </ModelTabs>
          <TreeBox>
            <TreeList>
              {TREE.map((n) => (
                <TreeRow key={n.label + n.level} $level={n.level} $trunk={n.trunk} $elbow={n.elbow}>
                  <ExpanderSlot>{n.exp && <Expander open={n.exp === "open"} />}</ExpanderSlot>
                  <TreeContent $selected={n.selected}>
                    <TreeIconBox>{n.icon}</TreeIconBox>
                    {n.label}
                  </TreeContent>
                </TreeRow>
              ))}
            </TreeList>
            <ScrollTrack>
              <ScrollArrow />
              <ScrollThumb />
              <ScrollArrow $down />
            </ScrollTrack>
          </TreeBox>
          <PropsTable>
            <PropsHead>
              <PropsHeadCell $w={125}>属性</PropsHeadCell>
              <PropsHeadCell>值</PropsHeadCell>
            </PropsHead>
            <PropsBand>基本信息</PropsBand>
            <PropsRow>
              <PropsKey>标签</PropsKey>
              <PropsValue>压力云图1</PropsValue>
            </PropsRow>
          </PropsTable>
        </LeftPanel>

        <RightPanel>
          <ViewToolbar>
            <ToolSlot><CameraIcon /></ToolSlot>
            <ToolSlot $ml={10}><PrinterIcon /></ToolSlot>
            <ToolSep $ml={6} />
            <ToolSlot $ml={4}><MeasureIcon /></ToolSlot>
            <ToolSlot $ml={2} $w={10}><ChevronSmall /></ToolSlot>
            <ToolSlot $ml={9}><ProhibitIcon /></ToolSlot>
            <ToolSlot $ml={1} $w={10}><ChevronSmall /></ToolSlot>
            <ToolSep $ml={7} />
            <ToolSlot $ml={5}><ZoomBoxIcon /></ToolSlot>
            <ToolSlot $ml={10}><FitIcon /></ToolSlot>
            <ToolSlot $ml={10}><DiamondIcon /></ToolSlot>
            <ToolSlot $ml={10}><XyzIcon /></ToolSlot>
            <ToolSlot $w={10}><ChevronSmall /></ToolSlot>
            <ToolSep $ml={6} />
            <ToolSlot $ml={6}><EyeIcon /></ToolSlot>
            <ToolSlot $ml={10}><HalfIcon /></ToolSlot>
            <ToolSep $ml={6} />
            <ToolSlot $ml={6}><GhostIcon /></ToolSlot>
            <ToolSlot $ml={10}><GhostIcon dark /></ToolSlot>
          </ViewToolbar>
          <Viewport>
            <Scene />
            <SideHandle>
              {HANDLE_TICKS.map((on, i) => (
                <HandleTick key={i} $on={on} />
              ))}
            </SideHandle>
          </Viewport>
        </RightPanel>
      </Workspace>
    </Page>
  );
}
